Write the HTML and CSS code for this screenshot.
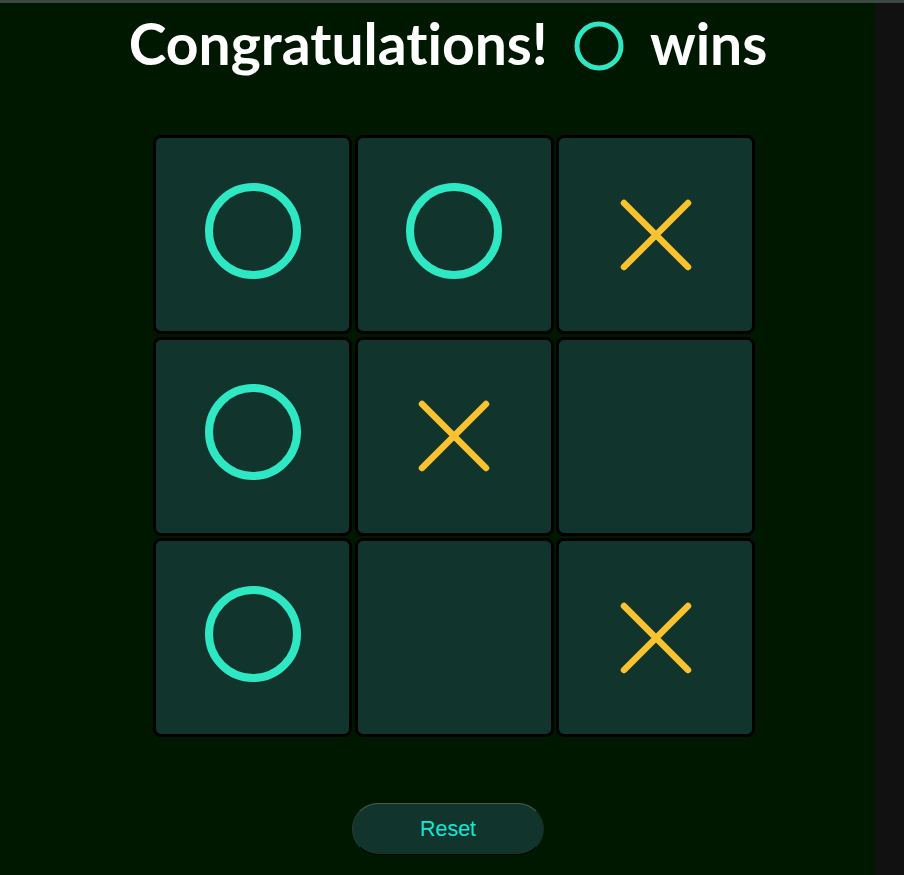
FILE: index.html
```html
<!DOCTYPE html>
<html lang="en">
<head>
<meta charset="utf-8">
<title>Tic Tac Toe</title>
<link rel="stylesheet" href="styles.css">
</head>
<body>
<div class="topline"></div>
<div class="layout">
  <main class="game">
    <h1 class="title">
      <span>Congratulations!</span>
      <svg class="title-o" width="50" height="50" viewBox="0 0 50 50"><circle cx="25" cy="25" r="22" fill="none" stroke="#2ee8c4" stroke-width="5"/></svg>
      <span>wins</span>
    </h1>
    <div class="board">
      <div class="cell"><svg class="o" width="100" height="100" viewBox="0 0 100 100"><circle cx="50" cy="50" r="44" fill="none" stroke="#2ee8c4" stroke-width="8"/></svg></div>
      <div class="cell"><svg class="o" width="100" height="100" viewBox="0 0 100 100"><circle cx="50" cy="50" r="44" fill="none" stroke="#2ee8c4" stroke-width="8"/></svg></div>
      <div class="cell"><svg class="x" width="72" height="72" viewBox="0 0 72 72"><path d="M4 4 L68 68 M68 4 L4 68" stroke="#f9c22e" stroke-width="6.5" stroke-linecap="round"/></svg></div>
      <div class="cell"><svg class="o" width="100" height="100" viewBox="0 0 100 100"><circle cx="50" cy="50" r="44" fill="none" stroke="#2ee8c4" stroke-width="8"/></svg></div>
      <div class="cell"><svg class="x" width="72" height="72" viewBox="0 0 72 72"><path d="M4 4 L68 68 M68 4 L4 68" stroke="#f9c22e" stroke-width="6.5" stroke-linecap="round"/></svg></div>
      <div class="cell"></div>
      <div class="cell"><svg class="o" width="100" height="100" viewBox="0 0 100 100"><circle cx="50" cy="50" r="44" fill="none" stroke="#2ee8c4" stroke-width="8"/></svg></div>
      <div class="cell"></div>
      <div class="cell"><svg class="x" width="72" height="72" viewBox="0 0 72 72"><path d="M4 4 L68 68 M68 4 L4 68" stroke="#f9c22e" stroke-width="6.5" stroke-linecap="round"/></svg></div>
    </div>
    <button class="reset">Reset</button>
  </main>
  <aside class="side"></aside>
</div>
</body>
</html>
```
FILE: styles.css
```css
html, body {
  margin: 0;
  padding: 0;
  height: 100%;
}
body {
  background: #011800;
  overflow: hidden;
}
.topline {
  height: 3px;
  background: #3c4842;
}
.layout {
  display: flex;
  height: 872px;
}
.game {
  width: 875px;
  display: flex;
  flex-direction: column;
  align-items: center;
  padding-left: 21px;
  box-sizing: border-box;
}
.side {
  width: 29px;
  background: #111111;
}
.title {
  margin: 10px 0 0;
  height: 60px;
  display: flex;
  align-items: center;
  gap: 26px;
  font-family: "Lato", sans-serif;
  font-weight: 700;
  font-size: 57px;
  line-height: 60px;
  font-variant-ligatures: none;
  color: #ffffff;
}
.title-o {
  display: block;
  margin-top: 6px;
}
.board {
  margin-top: 62px;
  margin-left: 12px;
  display: grid;
  grid-template-columns: repeat(3, 199px);
  grid-template-rows: repeat(3, 199px);
  gap: 2.5px;
}
.cell {
  box-sizing: border-box;
  border: 3px solid #000000;
  border-radius: 8px;
  background: #11352d;
  display: flex;
  align-items: center;
  justify-content: center;
}
.o {
  display: block;
  margin-bottom: 8px;
}
.x {
  display: block;
}
.reset {
  margin-top: 66px;
  width: 192px;
  height: 52px;
  border-radius: 26px;
  background: #11352d;
  border: 1px solid;
  border-color: #4a5850 #1a2a24 #000 #2a3a34;
  font-family: "Liberation Sans", Arial, sans-serif;
  font-size: 21.5px;
  color: #12e6d6;
  padding: 0;
}
```
